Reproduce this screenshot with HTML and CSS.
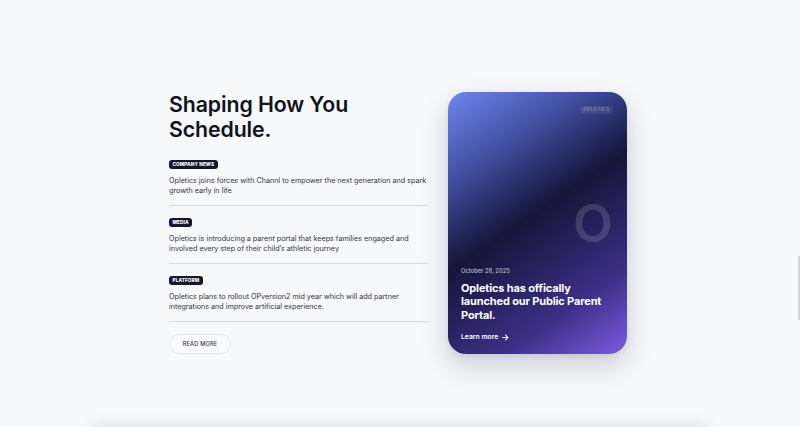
FILE: index.html
```html
<!DOCTYPE html>
<html lang="en">
<head>
<meta charset="utf-8">
<title>Shaping How You Schedule</title>
<link rel="stylesheet" href="styles.css">
</head>
<body>
<main class="page">
  <section class="news">
    <div class="news-list">
      <h1 class="title">Shaping How You<br>Schedule.</h1>
      <article class="item">
        <span class="tag">COMPANY NEWS</span>
        <p class="item-text">Opletics joins forces with Channl to empower the next generation and spark growth early in life</p>
      </article>
      <article class="item">
        <span class="tag">MEDIA</span>
        <p class="item-text">Opletics is introducing a parent portal that keeps families engaged and involved every step of their child’s athletic journey</p>
      </article>
      <article class="item">
        <span class="tag">PLATFORM</span>
        <p class="item-text">Opletics plans to rollout OPversion2 mid year which will add partner integrations and improve artificial experience.</p>
      </article>
      <button class="read-more">READ MORE</button>
    </div>
    <div class="feature">
      <span class="brand">OPLETICS</span>
      <span class="watermark">O</span>
      <div class="feature-body">
        <div class="date">October 28, 2025</div>
        <h2 class="feature-title">Opletics has offically launched our Public Parent Portal.</h2>
        <a class="learn" href="#">Learn more
          <svg class="arrow" viewBox="0 0 10 10" width="7" height="7"><path d="M1 5h7.5M5.2 1.6L8.6 5 5.2 8.4" fill="none" stroke="#fff" stroke-width="1.5" stroke-linecap="round" stroke-linejoin="round"/></svg>
        </a>
      </div>
    </div>
  </section>
  <div class="next-section"></div>
</main>
<div class="scroll-thumb"></div>
</body>
</html>
```
FILE: styles.css
```css
* { box-sizing: border-box; }
html, body {
  margin: 0;
  padding: 0;
  background: #f7f8fa;
  font-family: Inter, "Noto Sans", sans-serif;
  overflow: hidden;
  height: 427px;
}
.page {
  display: flex;
  flex-direction: column;
  align-items: center;
  padding-top: 92px;
}
.news {
  display: flex;
  align-items: flex-start;
  gap: 20px;
  padding-right: 4px;
}
.news-list {
  width: 259px;
  display: flex;
  flex-direction: column;
  align-items: flex-start;
}
.title {
  margin: 0 0 18px;
  font-size: 21.3px;
  line-height: 25px;
  font-weight: 600;
  color: #12131c;
  letter-spacing: -0.1px;
}
.item {
  width: 100%;
  padding-bottom: 9px;
  border-bottom: 1px solid #d6d8dd;
  margin-bottom: 12px;
  display: flex;
  flex-direction: column;
  align-items: flex-start;
}
.tag {
  display: inline-block;
  height: 9px;
  line-height: 9px;
  padding: 0 3.5px;
  border-radius: 3px;
  background: #16162c;
  color: #fff;
  font-size: 4.7px;
  font-weight: 800;
  letter-spacing: 0.1px;
}
.item-text {
  margin: 7px 0 0;
  font-size: 7.2px;
  line-height: 10px;
  color: #34363f;
}
.read-more {
  width: 62px;
  height: 20px;
  border: 1px solid #e3e5ea;
  border-radius: 10px;
  background: #f9fafb;
  font-family: Inter, sans-serif;
  font-size: 5.6px;
  font-weight: 500;
  color: #3d404b;
  letter-spacing: 0.2px;
  padding: 0;
}
.feature {
  position: relative;
  width: 179px;
  height: 262px;
  border-radius: 18px;
  overflow: hidden;
  background: linear-gradient(146deg, #6f86ec 0%, #4454a8 22%, #252b63 38%, #15163a 47%, #26205a 60%, #3d2f86 78%, #7b5ce2 100%);
  box-shadow: 0 12px 28px rgba(30, 30, 70, 0.18), 0 2px 6px rgba(30, 30, 70, 0.08);
  display: flex;
  flex-direction: column;
  padding: 14px 14px 12px 13px;
  color: #fff;
}
.brand {
  align-self: flex-end;
  height: 8px;
  line-height: 8px;
  padding: 0 3px;
  border-radius: 2.5px;
  background: rgba(255, 255, 255, 0.07);
  color: rgba(255, 255, 255, 0.3);
  font-size: 4.6px;
  font-weight: 700;
  letter-spacing: 0.5px;
}
.watermark {
  position: absolute;
  right: 14px;
  top: 102px;
  font-size: 52px;
  line-height: 60px;
  font-weight: 600;
  color: rgba(255, 255, 255, 0.14);
}
.feature-body {
  margin-top: auto;
}
.date {
  font-size: 5.8px;
  line-height: 8px;
  color: rgba(255, 255, 255, 0.72);
  font-weight: 500;
  margin-bottom: 7px;
}
.feature-title {
  margin: 0 0 10px;
  font-size: 11px;
  line-height: 13.5px;
  font-weight: 700;
  letter-spacing: -0.15px;
}
.learn {
  display: flex;
  align-items: center;
  gap: 4px;
  color: #fff;
  text-decoration: none;
  font-size: 6.8px;
  line-height: 10px;
  font-weight: 600;
}
.next-section {
  margin-top: 76px;
  width: 620px;
  height: 60px;
  background: #f7f8fa;
  box-shadow: 0 -3px 16px rgba(20, 20, 40, 0.14);
  border-radius: 12px;
}
.scroll-thumb {
  position: fixed;
  right: 0;
  top: 256px;
  width: 2px;
  height: 64px;
  background: #d2d4da;
}
```
